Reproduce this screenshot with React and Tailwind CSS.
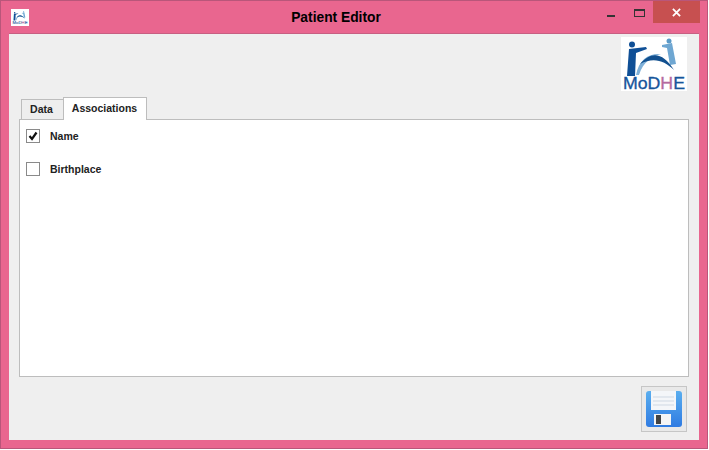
import React from "react";

function Logo() {
  return (
    <svg viewBox="0 0 66 54" className="w-full h-full block">
      <rect width="66" height="54" fill="#fff" />
      <circle cx="11" cy="7.5" r="3" fill="#0f4f96" />
      <path d="M8 12 L25 10 L26 12 L15 16 L14 39 L6 39 Z" fill="#0f4f96" />
      <circle cx="48" cy="4" r="2.5" fill="#5b9ac8" />
      <path d="M41 8 L51 6 L55 27 L49 28 L46 11 L41 10 Z" fill="#6fa7d2" />
      <path d="M15 38 C18 22 28 16 40 17 C31 19 22 25 18 38 Z" fill="#7fb0d8" />
      <path d="M19 27 C30 14 42 15 53 33 C43 23 32 20 19 27 Z" fill="#12508f" />
      <text x="2" y="52" fontFamily="'Liberation Sans', sans-serif" fontSize="16" strokeWidth="0.3" textLength="62" lengthAdjust="spacingAndGlyphs">
        <tspan fill="#17559b" stroke="#17559b">MoD</tspan>
        <tspan fill="#b56aa0" stroke="#b56aa0">H</tspan>
        <tspan fill="#17559b" stroke="#17559b">E</tspan>
      </text>
    </svg>
  );
}

function SaveIcon() {
  return (
    <svg viewBox="0 0 36 36" className="w-[36px] h-[36px] block">
      <defs>
        <linearGradient id="fl" x1="0" y1="0" x2="0" y2="1">
          <stop offset="0" stopColor="#5aaeef" />
          <stop offset="1" stopColor="#2f7be2" />
        </linearGradient>
      </defs>
      <path d="M3 0 H33 Q36 0 36 3 V33 Q36 36 33 36 H3 Q0 36 0 33 V3 Q0 0 3 0 Z" fill="url(#fl)" />
      <rect x="5" y="0" width="25" height="19" fill="#f4f6f9" />
      <path d="M7 6 H28 M7 10 H28 M7 14 H28" stroke="#cfd8e3" strokeWidth="1" />
      <rect x="8" y="23" width="17" height="11" fill="#f5f5f5" />
      <rect x="10" y="24" width="5" height="9" fill="#444" />
    </svg>
  );
}

export default function App() {
  return (
    <div className="w-[709px] h-[450px] bg-white font-['Liberation_Sans',sans-serif] overflow-hidden">
      <div className="w-[708px] h-[449px] bg-[#e9668f] border border-[#b9567a] flex flex-col">
        <div className="h-[32px] flex items-start shrink-0 relative">
          <div className="w-[18px] h-[17px] ml-[10px] mt-[8px] border border-white/70 bg-white shrink-0">
            <Logo />
          </div>
          <div className="absolute left-0 right-[36px] top-[9px] text-center text-[13.8px] leading-[16px] font-bold text-black">Patient Editor</div>
          <div className="ml-auto flex items-start">
            <div className="w-[8px] h-[2px] bg-[#333] mt-[14px] mr-[19px]" />
            <div className="w-[11px] h-[8px] border border-[#333] border-t-2 mt-[8px] mr-[8px]" />
            <div className="w-[47px] h-[22px] bg-[#c75050] flex items-center justify-center mr-[7px]">
              <svg viewBox="0 0 10 10" className="w-[9px] h-[9px]">
                <path d="M1 1 L9 9 M9 1 L1 9" stroke="#fff" strokeWidth="2" />
              </svg>
            </div>
          </div>
        </div>
        <div className="mx-[8px] h-[407px] bg-[#efefef] border-t border-[#c75f82] flex flex-col pl-[10px] pr-[10px] relative">
          <div className="h-[54px] flex justify-end shrink-0 pt-[3px] pr-[2px]">
            <div className="w-[66px] h-[54px] shrink-0"><Logo /></div>
          </div>
          <div className="h-[31px] mt-[1px] flex items-end pl-[2px] relative z-10 shrink-0 -mb-px">
            <div className="w-[42px] h-[20px] bg-[#eeeeee] border border-b-0 border-r-0 border-[#bdbdbd] text-[10.5px] font-bold text-[#222] flex items-center justify-center mb-px pr-[2px]">Data</div>
            <div className="w-[84px] h-[23px] bg-white border border-b-0 border-[#bdbdbd] text-[10.5px] font-bold text-[#222] flex items-center justify-center pr-[1px]">Associations</div>
          </div>
          <div className="w-[670px] h-[258px] bg-white border border-[#bdbdbd] shrink-0 flex flex-col pl-[6px] pt-[9px] gap-[19px]">
            <div className="flex items-center gap-[10px] h-[14px]">
              <div className="w-[14px] h-[14px] border border-[#8a8a8a] bg-white flex items-center justify-center">
                <svg viewBox="0 0 12 12" className="w-[12px] h-[12px]">
                  <path d="M2.5 6 L5 9 L9.5 2.5" fill="none" stroke="#111" strokeWidth="2.2" />
                </svg>
              </div>
              <span className="text-[10.5px] leading-[14px] font-bold text-[#222]">Name</span>
            </div>
            <div className="flex items-center gap-[10px] h-[14px]">
              <div className="w-[14px] h-[14px] border border-[#8a8a8a] bg-white" />
              <span className="text-[10.5px] leading-[14px] font-bold text-[#222]">Birthplace</span>
            </div>
          </div>
          <div className="flex justify-end mt-[9px] pr-[2px]">
            <div className="w-[46px] h-[46px] bg-[#e9e9e9] border border-[#c6c6c6] flex items-center justify-center">
              <SaveIcon />
            </div>
          </div>
        </div>
      </div>
    </div>
  );
}
